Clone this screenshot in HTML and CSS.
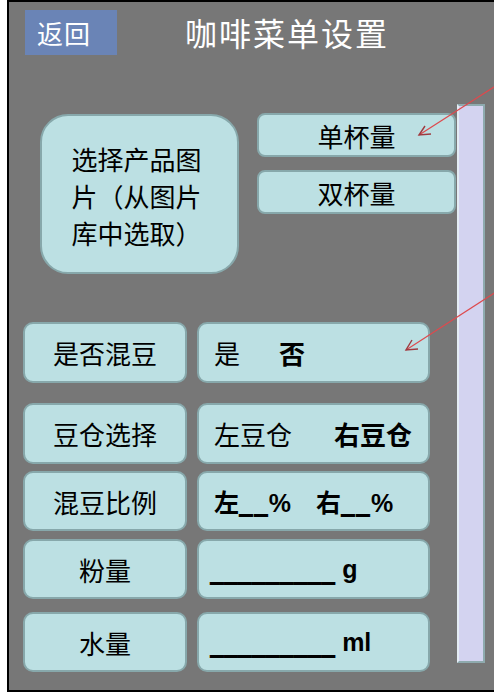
FILE: index.html
```html
<!DOCTYPE html>
<html lang="zh">
<head>
<meta charset="utf-8">
<link rel="stylesheet" href="styles.css">
</head>
<body>
<div class="frame">
  <div class="header">
    <div class="back">返回</div>
    <div class="title">咖啡菜单设置</div>
  </div>
  <div class="main">
    <div class="content">
      <div class="top">
        <div class="box picker"><div class="picker-text">选择产品图片（从图片库中选取）</div></div>
        <div class="cups">
          <div class="box cup">单杯量</div>
          <div class="box cup">双杯量</div>
        </div>
      </div>
      <div class="rows">
        <div class="row r1">
          <div class="box label">是否混豆</div>
          <div class="box value"><span>是</span><span class="b opt">否</span></div>
        </div>
        <div class="row r2">
          <div class="box label">豆仓选择</div>
          <div class="box value"><span>左豆仓</span><span class="b opt2">右豆仓</span></div>
        </div>
        <div class="row r3">
          <div class="box label">混豆比例</div>
          <div class="box value latin"><span class="b">左<span class="us">__</span>%</span><span class="b opt3">右<span class="us">__</span>%</span></div>
        </div>
        <div class="row r4">
          <div class="box label">粉量</div>
          <div class="box value latin"><span class="b us line">_________</span><span class="b unit">g</span></div>
        </div>
        <div class="row r5">
          <div class="box label">水量</div>
          <div class="box value latin"><span class="b us line">_________</span><span class="b unit">ml</span></div>
        </div>
      </div>
    </div>
    <div class="scrollbar"></div>
  </div>
</div>
<svg class="arrows" width="494" height="693" viewBox="0 0 494 693">
  <line x1="530" y1="64" x2="419" y2="135" class="ln"/>
  <polyline points="425,126 419,135 431,134" class="hd"/>
  <line x1="530" y1="270" x2="406" y2="350" class="ln"/>
  <polyline points="412,340 406,350 418,349" class="hd"/>
</svg>
</body>
</html>
```
FILE: styles.css
```css
html, body {
  margin: 0;
  padding: 0;
  background: #fff;
  overflow: hidden;
}
body {
  position: relative;
  width: 494px;
  height: 693px;
  font-family: "Noto Sans CJK SC", sans-serif;
}
.frame {
  margin-left: 7px;
  width: 495px;
  height: 692px;
  box-sizing: border-box;
  border: 2px solid #000;
  border-right: 0;
  background: #777777;
  display: flex;
  flex-direction: column;
}
.header {
  display: flex;
  align-items: center;
  padding: 8px 0 0 16px;
  height: 45px;
}
.back {
  width: 92px;
  height: 45px;
  box-sizing: border-box;
  background: #6a84b6;
  color: #fff;
  font-size: 26px;
  line-height: 45px;
  padding-left: 12px;
  letter-spacing: 1px;
}
.title {
  margin-left: 68px;
  color: #fff;
  font-size: 32px;
  line-height: 45px;
  letter-spacing: 2px;
}
.main {
  display: flex;
  margin-top: 49px;
}
.content {
  width: 448px;
}
.scrollbar {
  width: 28px;
  height: 559px;
  box-sizing: border-box;
  background: #d3d3f0;
  border: 2px solid #8eaaae;
  border-left-color: #e4ecf4;
}
.box {
  box-sizing: border-box;
  background: #bce0e3;
  border: 2px solid #87a8ab;
  border-radius: 10px;
  color: #000;
  font-size: 26px;
  display: flex;
  align-items: center;
}
.top {
  display: flex;
  padding: 9px 0 0 31px;
  gap: 18px;
}
.picker {
  margin-top: 1px;
  width: 199px;
  height: 160px;
  border-radius: 28px;
  justify-content: center;
}
.picker-text {
  width: 136px;
  line-height: 37px;
  margin-top: 3px;
}
.cups {
  display: flex;
  flex-direction: column;
  gap: 13px;
}
.cup {
  width: 199px;
  height: 44px;
  border-radius: 8px;
  justify-content: center;
}
.rows {
  padding-left: 14px;
}
.row {
  display: flex;
  gap: 10px;
  height: 60px;
}
.r1 { margin-top: 48px; height: 61px; }
.r2 { margin-top: 20px; height: 61px; }
.r3 { margin-top: 7px; }
.r4 { margin-top: 8px; }
.r5 { margin-top: 13px; }
.label {
  width: 164px;
  justify-content: center;
}
.value {
  width: 233px;
  padding-left: 15px;
}
.b { font-weight: 700; }
.opt { margin-left: 39px; }
.opt2 { margin-left: 42px; }
.latin {
  font-family: "Liberation Sans", "Noto Sans CJK SC", sans-serif;
  font-size: 25px;
}
.us {
  text-shadow: 0 1px 0 #000, 0 2px 0 #000;
  letter-spacing: 1px;
}
.opt3 { margin-left: 25px; }
.line {
  letter-spacing: 0;
  margin-left: -4px;
  position: relative;
  top: 2px;
}
.unit { margin-left: 7px; }
.arrows {
  position: absolute;
  left: 0;
  top: 0;
  pointer-events: none;
}
.ln {
  stroke: #dd4a4e;
  stroke-width: 1.2;
}
.hd {
  fill: none;
  stroke: #9e3a40;
  stroke-width: 1.4;
}
```
